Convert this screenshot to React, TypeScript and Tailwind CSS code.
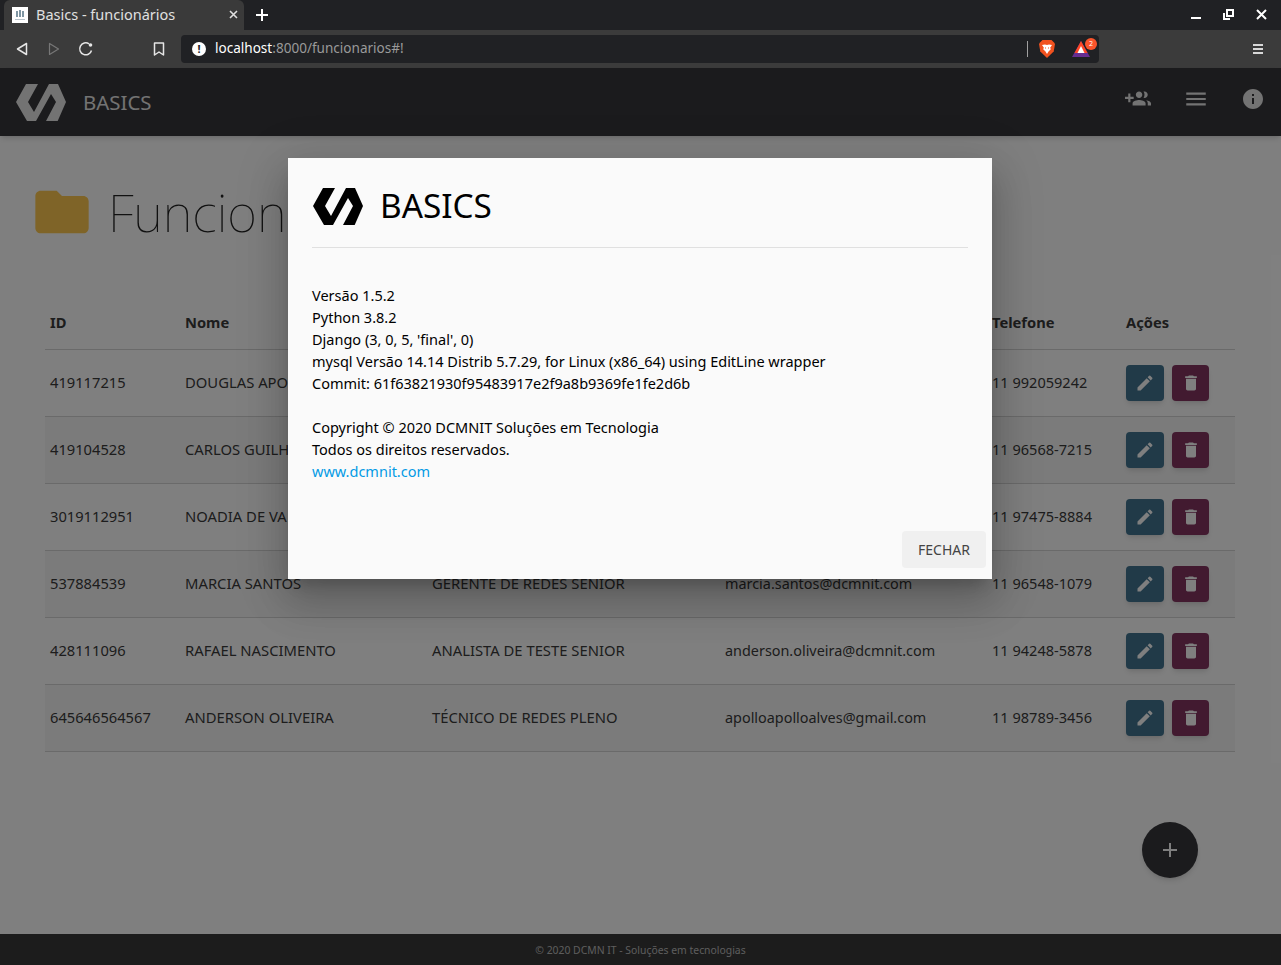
import { MdAdd, MdDelete, MdEdit, MdFolder, MdInfo, MdMenu } from "react-icons/md";

const FONT = "font-['Noto_Sans','Open_Sans',sans-serif]";

// cells hidden behind the dialog stay empty
const rows = [
  ["419117215", "DOUGLAS APO", "", "", "11 992059242"],
  ["419104528", "CARLOS GUILH", "", "", "11 96568-7215"],
  ["3019112951", "NOADIA DE VA", "", "", "11 97475-8884"],
  ["537884539", "MARCIA SANTOS", "GERENTE DE REDES SENIOR", "marcia.santos@dcmnit.com", "11 96548-1079"],
  ["428111096", "RAFAEL NASCIMENTO", "ANALISTA DE TESTE SENIOR", "anderson.oliveira@dcmnit.com", "11 94248-5878"],
  ["645646564567", "ANDERSON OLIVEIRA", "TÉCNICO DE REDES PLENO", "apolloapolloalves@gmail.com", "11 98789-3456"],
];

function Logo({ className }: { className: string }) {
  return (
    <svg viewBox="0 0 50 37" className={className} fill="currentColor">
      <path d="M10 0h12L12 18l6 10L33 0h9l8 18-8.300 19H30l10-19-5-8-15 27h-9L0 18z" />
    </svg>
  );
}

function GroupAdd({ className }: { className: string }) {
  return (
    <svg viewBox="0 0 24 24" className={className} fill="currentColor">
      <path d="M8 10H5V7H3v3H0v2h3v3h2v-3h3v-2zm10 1c1.660 0 2.990-1.340 2.990-3S19.660 5 18 5c-.32 0-.63.050-.91.140.570.810.900 1.790.900 2.860s-.34 2.040-.9 2.860c.280.090.590.140.910.140zm-5 0c1.660 0 2.990-1.340 2.990-3S14.660 5 13 5s-3 1.340-3 3 1.340 3 3 3zm6.620 2.160c.830.730 1.380 1.660 1.380 2.840v2h3v-2c0-1.540-2.370-2.490-4.380-2.840zM13 13c-2 0-6 1-6 3v2h12v-2c0-2-4-3-6-3z" />
    </svg>
  );
}

function BrowserBar() {
  return (
    <div className="h-[68px] shrink-0 bg-[#202124]">
      <div className="flex h-[30px] items-center pl-1">
        <div className="flex h-[30px] w-[240px] items-center rounded-t-md bg-[#3a3a3a] pb-px pl-2 pr-[6px] text-[14.500px] text-[#e0e0e0]">
          <svg viewBox="0 0 16 16" className="mr-2 h-4 w-4">
            <rect width="16" height="16" fill="#fff" />
            <path d="M4 4h2v6H4zM7 3h2v7H7zM10 4h2v6h-2z" fill="#7f96a3" />
            <path d="M3 12h10v1H3z" fill="#b8c4cb" />
          </svg>
          <span className="flex-1">Basics - funcionários</span>
          <svg viewBox="0 0 9 9" className="h-[9px] w-[9px]" fill="none" stroke="#e0e0e0" strokeWidth="1.600">
            <path d="M1 1l7 7M8 1l-7 7" />
          </svg>
        </div>
        <svg viewBox="0 0 12 12" className="ml-3 h-3 w-3" fill="none" stroke="white" strokeWidth="2">
          <path d="M6 0v12M0 6h12" />
        </svg>
        <div className="ml-auto flex h-full items-center pb-[2px] pr-[14px] text-white">
          <span className="mt-2 h-[2px] w-[10px] bg-white" />
          <svg viewBox="0 0 11 11" className="ml-[22px] h-[11px] w-[11px]" fill="none" stroke="white" strokeWidth="2">
            <path d="M4 1h6v6H4zM1 4v6h6" />
          </svg>
          <svg viewBox="0 0 11 11" className="ml-[22px] h-[11px] w-[11px]" fill="none" stroke="white" strokeWidth="2">
            <path d="M1 1l9 9M10 1l-9 9" />
          </svg>
        </div>
      </div>
      <div className="flex h-[38px] items-center bg-[#3b3b3b] pb-px">
        <svg viewBox="0 0 12 14" className="ml-4 h-[14px] w-[12px]" fill="none" stroke="#e6e6e6" strokeWidth="1.500" strokeLinejoin="round">
          <path d="M10.500 1.500v11L1.500 7z" />
        </svg>
        <svg viewBox="0 0 12 14" className="ml-5 h-[14px] w-[12px]" fill="none" stroke="#777" strokeWidth="1.200" strokeLinejoin="round">
          <path d="M1.500 1.500v11l9-5.500z" />
        </svg>
        <svg viewBox="0 0 16 16" className="ml-[18px] h-4 w-4" fill="none" stroke="#e6e6e6" strokeWidth="1.500">
          <path d="M13.500 9.500A6 6 0 1 1 11 2.800" />
          <circle cx="12.500" cy="4" r="1.800" fill="#e6e6e6" stroke="none" />
        </svg>
        <svg viewBox="0 0 12 14" className="ml-[59px] h-[14px] w-[12px]" fill="none" stroke="#e6e6e6" strokeWidth="1.500" strokeLinejoin="round">
          <path d="M1.500 1h9v12L6 10l-4.500 3z" />
        </svg>
        <div className="ml-4 flex h-7 w-[918px] items-center rounded bg-[#202124] pl-[11px] pr-[9px]">
          <span className="flex h-[14px] w-[14px] items-center justify-center rounded-full bg-white text-[11px] font-bold leading-none text-[#202124]">!</span>
          <span className="ml-[9px] text-[13.550px] text-white">
            localhost<span className="text-[#9a9a9a]">:8000/funcionarios#!</span>
          </span>
          <span className="ml-auto h-4 w-px bg-[#a0a0a0]" />
          <svg viewBox="0 0 16 18" className="ml-[11px] h-[18px] w-4">
            <path d="M3.500 0h9L15 2.500l1 1.500-1.300 7.500L8 18l-6.700-6.500L0 4l1-1.500z" fill="#f1521f" />
            <path d="M3 5l3-.5L8 5l2-.5 3 .5-2 3 1 1-2.500 2.500L8 14l-1.500-2.500L4 9l1-1z" fill="#fff" />
            <path d="M6 7.500h1v1H6zM9 7.500h1v1H9z" fill="#f1521f" />
          </svg>
          <div className="relative ml-[17px] h-4 w-[18px]">
            <svg viewBox="0 0 18 16" className="h-4 w-[18px]">
              <path d="M9 0l9 16H0z" fill="#662d91" />
              <path d="M9 0l6.500 12h-13z" fill="#ff4724" />
              <path d="M9 5l3.500 7h-7z" fill="#fff" />
            </svg>
            <span className="absolute -right-[7px] -top-[3px] flex h-3 w-3 items-center justify-center rounded-full bg-[#fb542b] text-[7px] leading-none text-white">2</span>
          </div>
        </div>
        <div className="ml-[154px] flex w-[10px] flex-col gap-[2px]">
          <span className="h-[2px] bg-[#d8d8d8]" />
          <span className="h-[2px] bg-[#d8d8d8]" />
          <span className="h-[2px] bg-[#d8d8d8]" />
        </div>
      </div>
    </div>
  );
}

function AboutModal() {
  return (
    <div className="h-[421px] w-[704px] bg-[#fafafa] shadow-[0_24px_38px_3px_rgba(0,0,0,0.14),0_9px_46px_8px_rgba(0,0,0,0.12),0_11px_15px_-7px_rgba(0,0,0,0.2)]">
      <div className="mx-6 flex h-[90px] items-center border-b border-[#e0e0e0] pt-[8px]">
        <Logo className="ml-px h-[37px] w-[50px] text-black" />
        <span className="-mt-[2px] ml-[17px] text-[33.300px] leading-none text-black">BASICS</span>
      </div>
      <div className="mx-6 mt-[36px] text-[14.500px] leading-[22px] text-black">
        <p>Versão 1.5.2</p>
        <p>Python 3.8.2</p>
        <p>Django (3, 0, 5, 'final', 0)</p>
        <p>mysql Versão 14.14 Distrib 5.7.29, for Linux (x86_64) using EditLine wrapper</p>
        <p>Commit: 61f63821930f95483917e2f9a8b9369fe1fe2d6b</p>
        <p className="mt-[22px]">Copyright © 2020 DCMNIT Soluções em Tecnologia</p>
        <p>Todos os direitos reservados.</p>
        <p className="text-[#039be5]">www.dcmnit.com</p>
      </div>
      <div className="mr-[6px] mt-[49px] flex justify-end">
        <button className="h-[37px] w-[84px] rounded-sm bg-[#f0f0f0] text-[14px] text-[#444]">FECHAR</button>
      </div>
    </div>
  );
}

export default function App() {
  return (
    <div className={`flex h-[965px] flex-col overflow-hidden bg-white ${FONT}`}>
      <BrowserBar />
      <div className="relative flex flex-1 flex-col">
        <header className="flex h-[68px] shrink-0 items-center bg-[#36363a] pl-4 pr-4 text-[#e6e6e6] shadow-md">
          <Logo className="h-[37px] w-[50px]" />
          <span className="ml-[17px] text-[20.400px]">BASICS</span>
          <GroupAdd className="ml-auto -mt-[6px] h-[26px] w-[26px]" />
          <MdMenu className="ml-[32px] -mt-[6px] h-[26px] w-[26px]" />
          <MdInfo className="ml-[32px] -mt-[6px] h-6 w-6" />
        </header>

        <main className="flex-1 px-[45px]">
          <div className="mt-[40px] flex h-[72px] items-center">
            <MdFolder className="-ml-[15px] h-[64px] w-[64px] text-[#ffc950]" />
            <h1 className="ml-[14px] pt-[2px] text-[51.500px] font-thin leading-none text-[#222]">Funcion</h1>
          </div>
          <table className="mt-[50px] w-[1190px] table-fixed text-left text-[14.700px] text-[#3a3a3a]">
            <colgroup>
              <col className="w-[135px]" />
              <col className="w-[247px]" />
              <col className="w-[293px]" />
              <col className="w-[267px]" />
              <col className="w-[134px]" />
              <col />
            </colgroup>
            <thead>
              <tr className="h-[51px] border-b border-[#d4d4d4] font-bold">
                <th className="px-[5px] pb-[2px]">ID</th>
                <th className="px-[5px] pb-[2px]">Nome</th>
                <th className="px-[5px]" />
                <th className="px-[5px]" />
                <th className="px-[5px] pb-[2px]">Telefone</th>
                <th className="px-[5px] pb-[2px]">Ações</th>
              </tr>
            </thead>
            <tbody>
              {rows.map((r, i) => (
                <tr key={r[0]} className={`h-[67px] border-b border-[#d4d4d4] ${i % 2 === 1 ? "bg-[#f7f7f7]" : ""}`}>
                  <td className="px-[5px]">{r[0]}</td>
                  <td className="px-[5px] text-[14.800px]">{r[1]}</td>
                  <td className="px-[5px] text-[14.800px]">{r[2]}</td>
                  <td className="px-[5px] text-[14.400px]">{r[3]}</td>
                  <td className="px-[5px] text-[14.550px]">{r[4]}</td>
                  <td className="px-[5px]">
                    <div className="flex gap-2">
                      <button className="flex h-9 w-[38px] items-center justify-center rounded bg-[#427490] text-white shadow-md">
                        <MdEdit className="h-5 w-5" />
                      </button>
                      <button className="flex h-9 w-[37px] items-center justify-center rounded bg-[#843460] text-white shadow-md">
                        <MdDelete className="h-5 w-5" />
                      </button>
                    </div>
                  </td>
                </tr>
              ))}
            </tbody>
          </table>
          <div className="mr-[38px] mt-[70px] flex justify-end">
            <button className="flex h-14 w-14 items-center justify-center rounded-full bg-[#36363a] text-white shadow-md">
              <MdAdd className="h-6 w-6" />
            </button>
          </div>
        </main>

        <footer className="flex h-[31px] shrink-0 items-center justify-center bg-[#383838] pt-[3px] text-[10.400px] text-[#bbb]">
          © 2020 DCMN IT - Soluções em tecnologias
        </footer>

        <div className="absolute inset-0 flex justify-center bg-black/50 pr-px pt-[90px]">
          <AboutModal />
        </div>
      </div>
    </div>
  );
}
